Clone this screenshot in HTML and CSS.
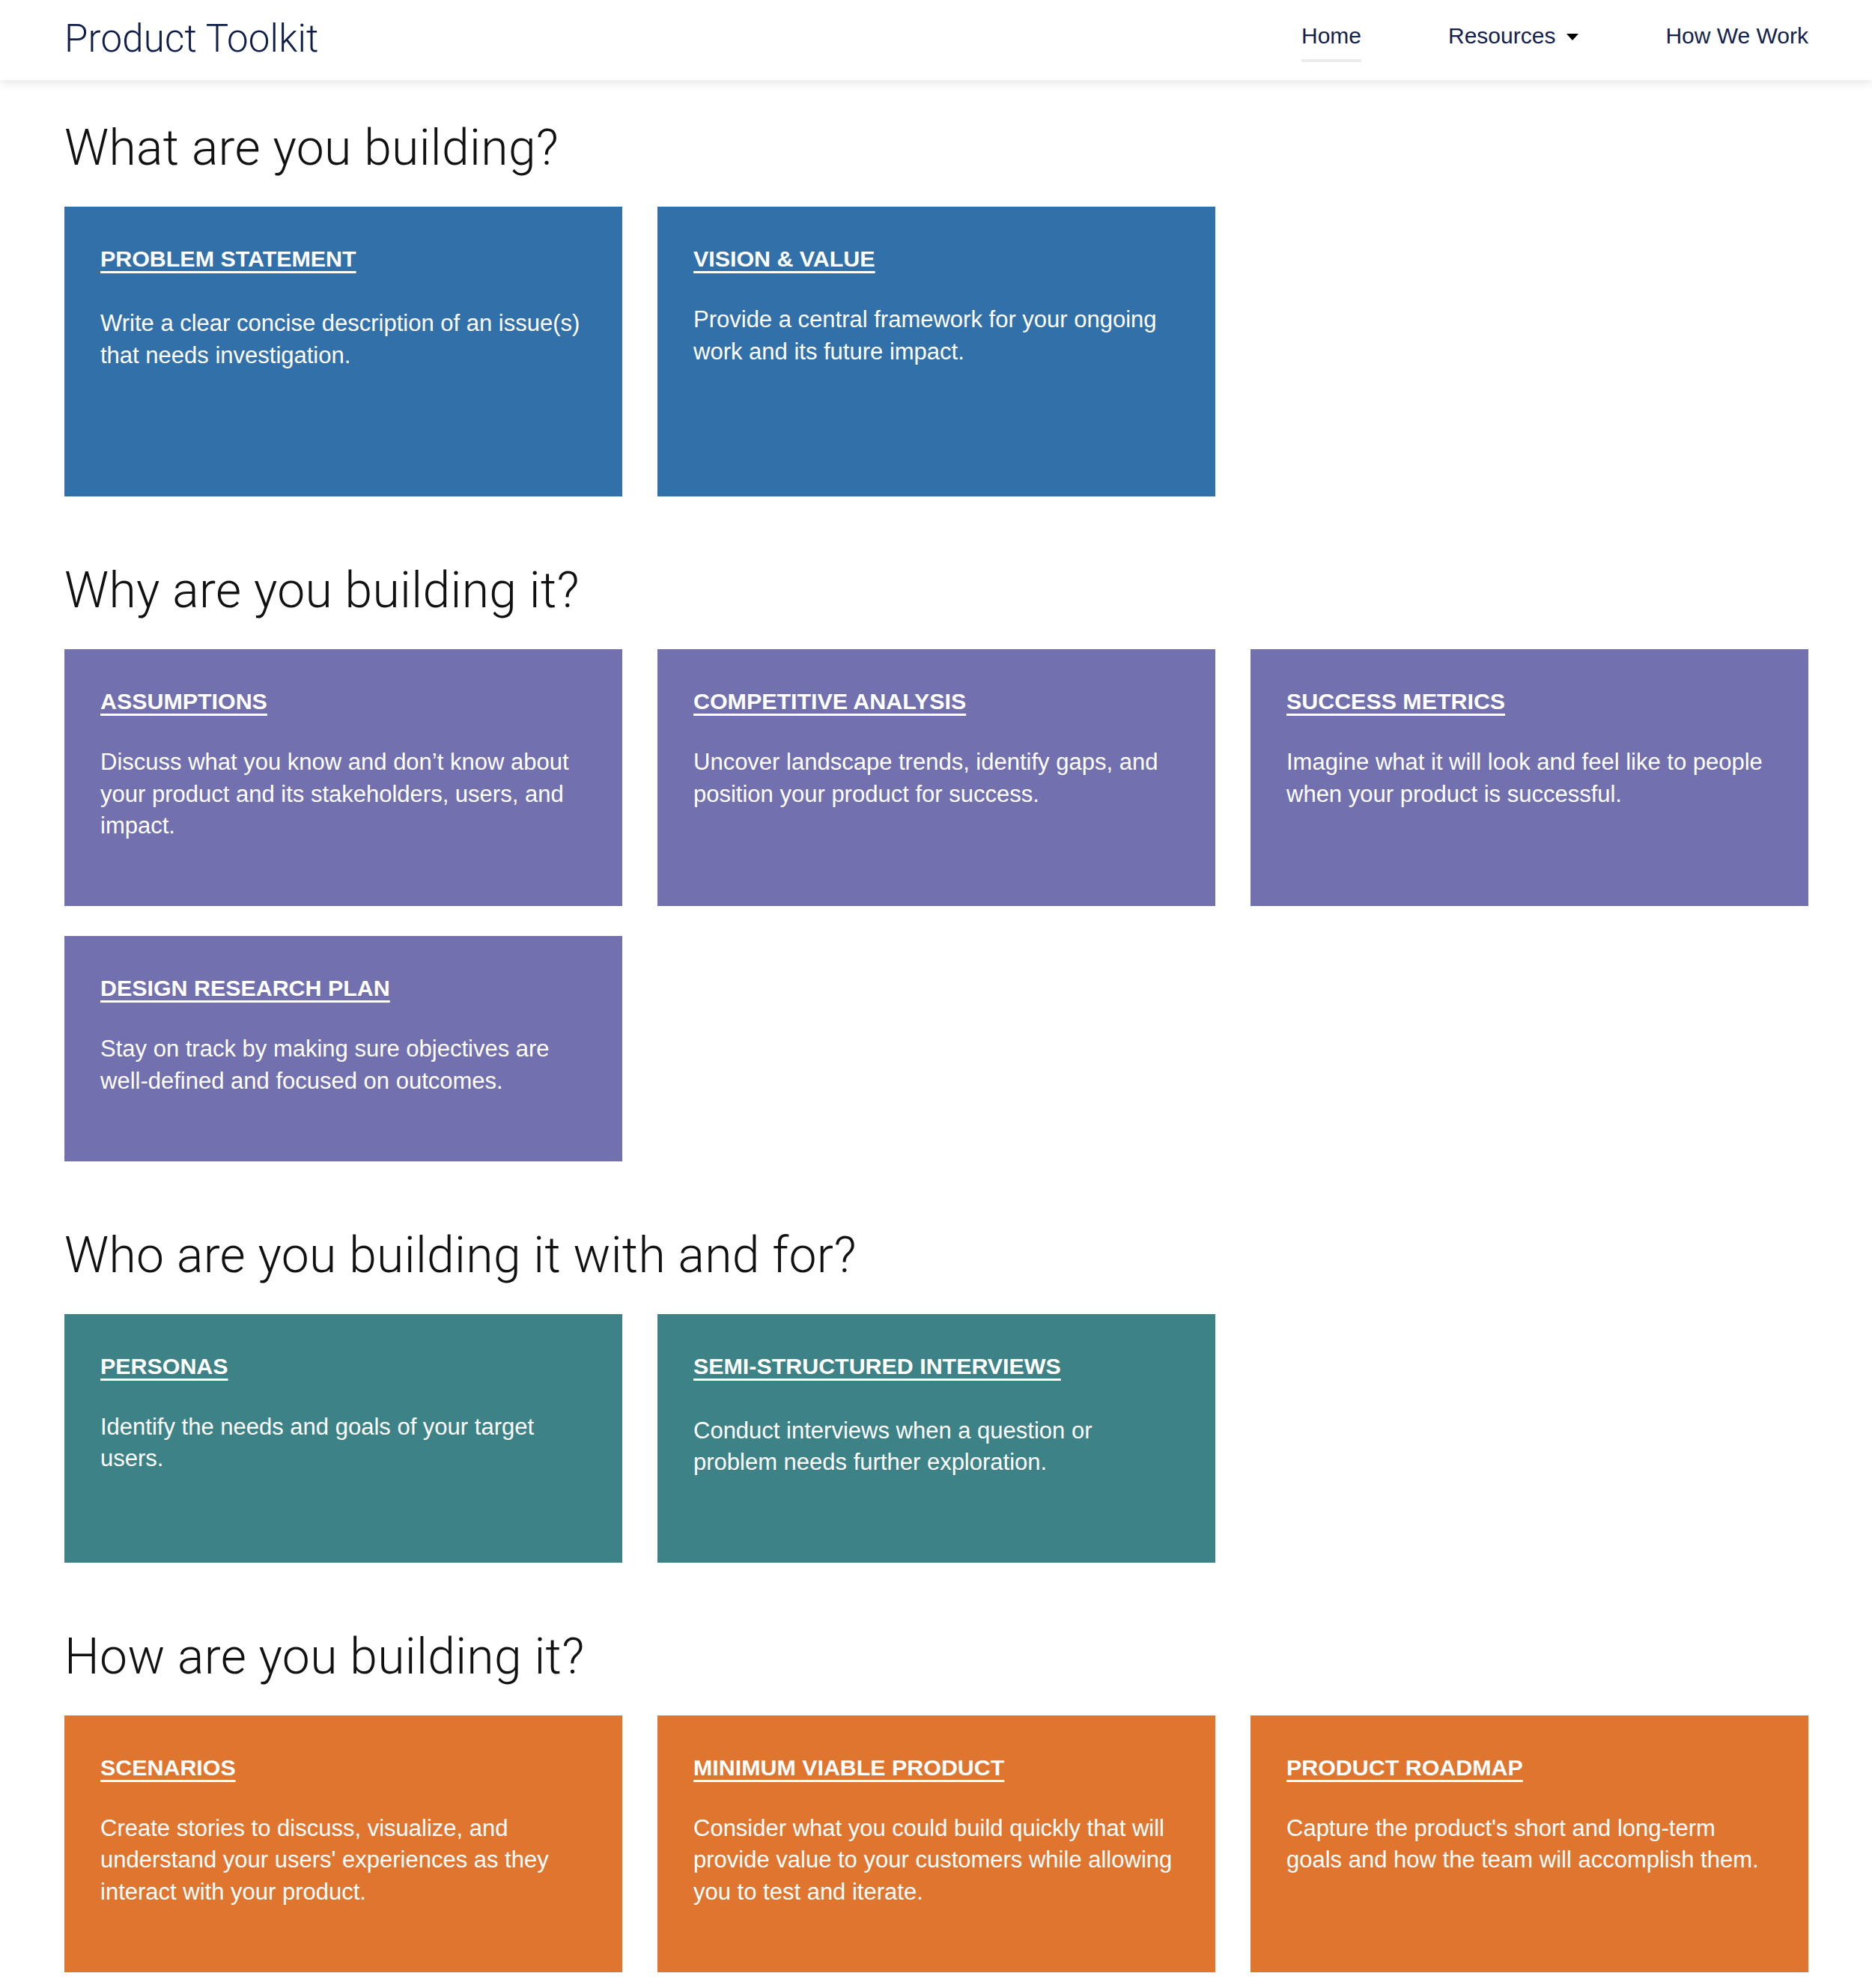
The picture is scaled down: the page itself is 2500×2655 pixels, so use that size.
FILE: index.html
```html
<!DOCTYPE html>
<html lang="en">
<head>
<meta charset="utf-8">
<title>Product Toolkit</title>
<link rel="stylesheet" href="styles.css">
</head>
<body>
<header class="site-header">
  <a class="brand" href="#">Product Toolkit</a>
  <nav class="main-nav">
    <a class="nav-link is-active" href="#">Home</a>
    <a class="nav-link" href="#">Resources<span class="caret"></span></a>
    <a class="nav-link" href="#">How We Work</a>
  </nav>
</header>

<main class="page">
  <section class="section">
    <h2 class="section-title">What are you building?</h2>
    <div class="card-grid">
      <article class="card card--blue card--tall">
        <h3 class="card-title"><a href="#">PROBLEM STATEMENT</a></h3>
        <p class="card-text card-text--low">Write a clear concise description of an issue(s) that needs investigation.</p>
      </article>
      <article class="card card--blue card--tall">
        <h3 class="card-title"><a href="#">VISION &amp; VALUE</a></h3>
        <p class="card-text">Provide a central framework for your ongoing work and its future impact.</p>
      </article>
    </div>
  </section>

  <section class="section">
    <h2 class="section-title">Why are you building it?</h2>
    <div class="card-grid">
      <article class="card card--purple">
        <h3 class="card-title"><a href="#">ASSUMPTIONS</a></h3>
        <p class="card-text">Discuss what you know and don’t know about your product and its stakeholders, users, and impact.</p>
      </article>
      <article class="card card--purple">
        <h3 class="card-title"><a href="#">COMPETITIVE ANALYSIS</a></h3>
        <p class="card-text">Uncover landscape trends, identify gaps, and position your product for success.</p>
      </article>
      <article class="card card--purple">
        <h3 class="card-title"><a href="#">SUCCESS METRICS</a></h3>
        <p class="card-text">Imagine what it will look and feel like to people when your product is successful.</p>
      </article>
      <article class="card card--purple">
        <h3 class="card-title"><a href="#">DESIGN RESEARCH PLAN</a></h3>
        <p class="card-text">Stay on track by making sure objectives are well-defined and focused on outcomes.</p>
      </article>
    </div>
  </section>

  <section class="section">
    <h2 class="section-title">Who are you building it with and for?</h2>
    <div class="card-grid">
      <article class="card card--teal card--mid">
        <h3 class="card-title"><a href="#">PERSONAS</a></h3>
        <p class="card-text">Identify the needs and goals of your target users.</p>
      </article>
      <article class="card card--teal card--mid">
        <h3 class="card-title"><a href="#">SEMI-STRUCTURED INTERVIEWS</a></h3>
        <p class="card-text card-text--low">Conduct interviews when a question or problem needs further exploration.</p>
      </article>
    </div>
  </section>

  <section class="section">
    <h2 class="section-title">How are you building it?</h2>
    <div class="card-grid">
      <article class="card card--orange">
        <h3 class="card-title"><a href="#">SCENARIOS</a></h3>
        <p class="card-text">Create stories to discuss, visualize, and understand your users' experiences as they interact with your product.</p>
      </article>
      <article class="card card--orange">
        <h3 class="card-title"><a href="#">MINIMUM VIABLE PRODUCT</a></h3>
        <p class="card-text">Consider what you could build quickly that will provide value to your customers while allowing you to test and iterate.</p>
      </article>
      <article class="card card--orange">
        <h3 class="card-title"><a href="#">PRODUCT ROADMAP</a></h3>
        <p class="card-text">Capture the product's short and long-term goals and how the team will accomplish them.</p>
      </article>
    </div>
  </section>
</main>
</body>
</html>
```

FILE: styles.css
```css
* {
  box-sizing: border-box;
}

html, body {
  margin: 0;
  padding: 0;
  background: #ffffff;
}

body {
  font-family: "Liberation Sans", Arial, Helvetica, sans-serif;
  color: #111111;
}

/* ---------- Header ---------- */
.site-header {
  position: relative;
  z-index: 2;
  display: flex;
  justify-content: space-between;
  align-items: flex-start;
  height: 107px;
  padding: 0 85px 0 86px;
  background: #ffffff;
  box-shadow: 0 3px 12px rgba(0, 0, 0, 0.11);
}

.brand {
  margin-top: 22px;
  font-family: Roboto, "Liberation Sans", Arial, sans-serif;
  font-size: 51px;
  line-height: 60px;
  font-weight: 300;
  letter-spacing: 0.2px;
  color: #0f1d4a;
  text-decoration: none;
}

.main-nav {
  display: flex;
  gap: 116px;
  margin-top: 28px;
}

.nav-link {
  font-size: 30px;
  line-height: 40px;
  color: #13214d;
  text-decoration: none;
  padding-bottom: 11px;
  border-bottom: 4px solid transparent;
}

.nav-link.is-active {
  border-bottom-color: #ececec;
}

.caret {
  display: inline-block;
  width: 0;
  height: 0;
  margin-left: 15px;
  border-left: 8px solid transparent;
  border-right: 8px solid transparent;
  border-top: 9px solid #000000;
  vertical-align: 4px;
}

/* ---------- Page ---------- */
.page {
  padding: 52px 85px 21px 86px;
}

.section + .section {
  margin-top: 87px;
}

.section-title {
  margin: 0 0 39px;
  font-family: Roboto, "Liberation Sans", Arial, sans-serif;
  font-size: 66px;
  line-height: 78px;
  font-weight: 300;
  letter-spacing: 0.35px;
  color: #111111;
}

.card-grid {
  display: grid;
  grid-template-columns: repeat(3, 1fr);
  column-gap: 47px;
  row-gap: 40px;
}

.card {
  padding: 51px 48px 85px;
  color: #ffffff;
}

.card--tall {
  min-height: 387px;
}

.card--mid {
  min-height: 332px;
}

.card--blue {
  background: #3270a9;
}

.card--purple {
  background: #7270ae;
}

.card--teal {
  background: #3c8286;
}

.card--orange {
  background: #e07530;
}

.card-title {
  margin: 0;
  font-size: 30.4px;
  line-height: 36px;
  font-weight: 700;
}

.card-title a {
  color: #ffffff;
  text-decoration: underline;
  text-decoration-thickness: 3px;
  text-underline-offset: 6px;
}

.card-text {
  margin: 43px 0 0;
  font-size: 31px;
  line-height: 42.7px;
}

.card-text--low {
  margin-top: 48px;
}
```
